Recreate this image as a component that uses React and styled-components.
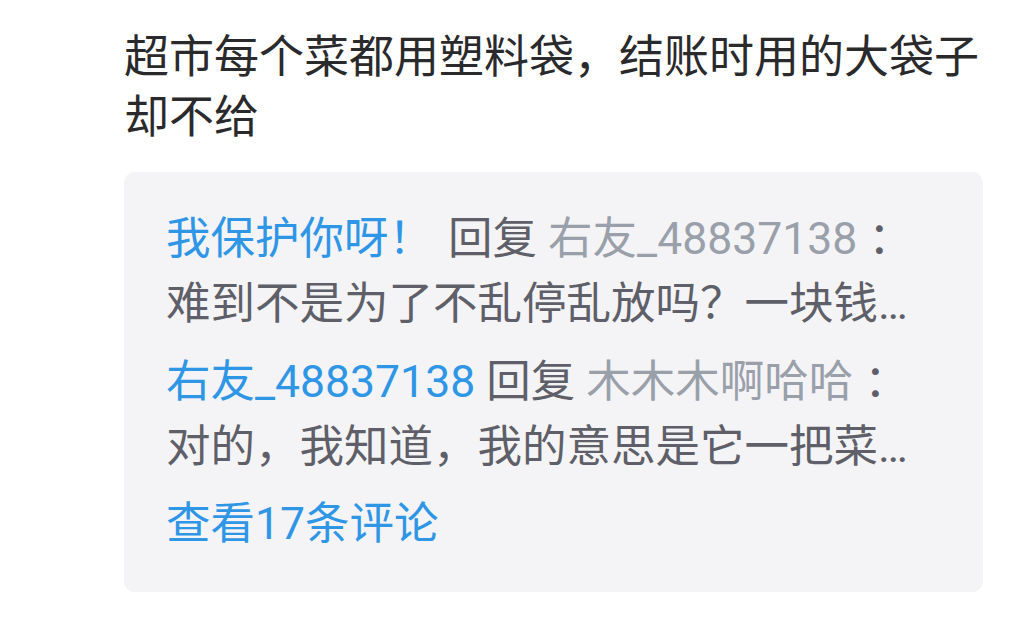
import styled, { createGlobalStyle } from "styled-components";

const GlobalStyle = createGlobalStyle`
  html, body {
    margin: 0;
    padding: 0;
    background: #ffffff;
  }
  body {
    font-family: Roboto, "Noto Sans CJK SC", "Noto Sans", sans-serif;
  }
`;

const Page = styled.div`
  width: 1032px;
  height: 618px;
  box-sizing: border-box;
  padding: 28px 49px 0 124px;
  overflow: hidden;
`;

const Title = styled.h1`
  margin: 0;
  font-size: 45px;
  line-height: 60px;
  font-weight: 400;
  color: #2a2a2c;
`;

const ReplyBox = styled.div`
  margin-top: 24px;
  box-sizing: border-box;
  background: #f4f4f6;
  border-radius: 11px;
  padding: 35px 42px 35px 42px;
  display: flex;
  flex-direction: column;
  gap: 13px;
  font-size: 44.5px;
  line-height: 65px;
`;

const Reply = styled.div`
  display: flex;
  flex-direction: column;
`;

const Head = styled.div`
  white-space: nowrap;
  color: #5e5f68;
`;

const Name = styled.span`
  color: ${(p) => (p.$target ? "#9aa0aa" : "#2f96e6")};
  margin-right: ${(p) => (p.$gap ? p.$gap : 0)}px;
`;

const Body = styled.div`
  color: #5e5f68;
  white-space: nowrap;
  overflow: hidden;
  text-overflow: ellipsis;
`;

const More = styled.a`
  color: #2f96e6;
  text-decoration: none;
  margin-top: -1px;
`;

const replies = [
  {
    from: "我保护你呀！",
    gap: 15,
    to: "右友_48837138",
    text: "难到不是为了不乱停乱放吗？一块钱能买很多个塑料袋了",
  },
  {
    from: "右友_48837138",
    gap: 11,
    to: "木木木啊哈哈",
    text: "对的，我知道，我的意思是它一把菜都给一个袋子，结账的时候却不给",
  },
];

export default function App() {
  return (
    <>
      <GlobalStyle />
      <Page>
        <Title>超市每个菜都用塑料袋，结账时用的大袋子却不给</Title>
        <ReplyBox>
          {replies.map((r) => (
            <Reply key={r.from}>
              <Head>
                <Name $gap={r.gap}>{r.from}</Name>
                回复 <Name $target>{r.to}</Name> ：
              </Head>
              <Body>{r.text}</Body>
            </Reply>
          ))}
          <More href="#">查看17条评论</More>
        </ReplyBox>
      </Page>
    </>
  );
}
